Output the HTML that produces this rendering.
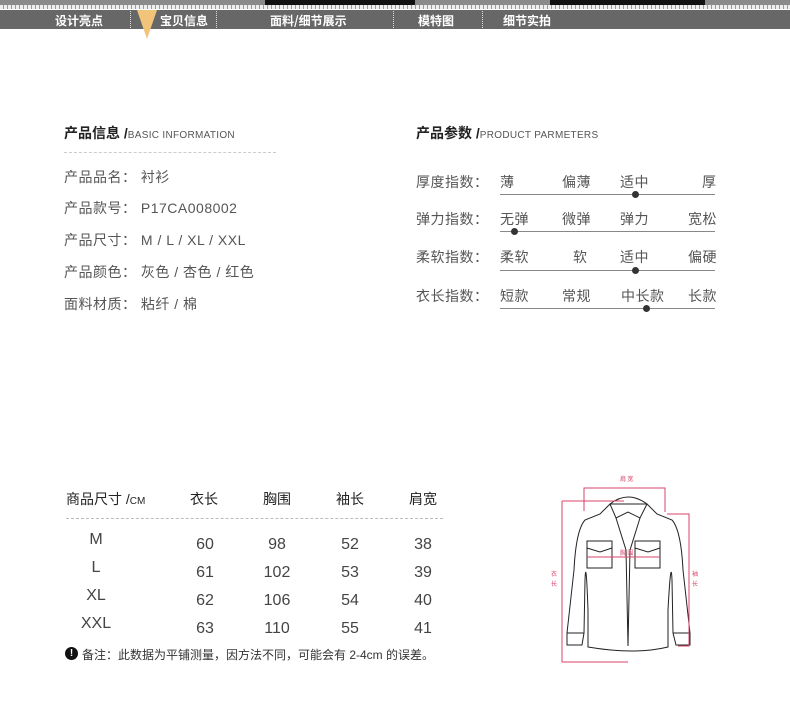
<!DOCTYPE html>
<html><head><meta charset="utf-8"><style>
*{margin:0;padding:0;box-sizing:border-box}
body{width:790px;height:709px;background:#fff;position:relative;overflow:hidden;font-family:"Liberation Sans","Noto Sans CJK SC",sans-serif;color:#555}
.a{position:absolute;white-space:nowrap}
.nav{position:absolute;left:0;top:10px;width:790px;height:19px;background:#676767}
.nav span{position:absolute;top:2px;color:#fff;font-size:12px;font-weight:bold;font-family:"WenQuanYi Zen Hei","Noto Sans CJK SC",sans-serif}
.dv{position:absolute;top:1px;height:17px;border-left:1px dotted #ddd}
.t{font-size:14px;font-weight:bold;color:#222}
.t small{font-size:10px;font-weight:normal;color:#555;letter-spacing:.3px}
.r{font-size:14px;color:#555;letter-spacing:.5px}
.ln{position:absolute;height:1px;background:#888}
.dot{position:absolute;width:7px;height:7px;border-radius:50%;background:#333}
.n{font-size:16px;color:#444;text-align:center;width:60px}
</style></head><body>
<div class="a" style="left:0;top:0;width:790px;height:8px;background:#8a8a8a"></div>
<div class="a" style="left:265px;top:0;width:150px;height:6px;background:#111"></div>
<div class="a" style="left:550px;top:0;width:155px;height:6px;background:#111"></div>
<div class="a" style="left:0;top:5px;width:790px;height:4px;background:repeating-linear-gradient(90deg,#eee 0 3px,#999 3px 4px)"></div>
<div class="nav">
<span style="left:55px">设计亮点</span><div class="dv" style="left:130px"></div>
<span style="left:160px">宝贝信息</span><div class="dv" style="left:216px"></div>
<span style="left:270px">面料/细节展示</span><div class="dv" style="left:393px"></div>
<span style="left:418px">模特图</span><div class="dv" style="left:482px"></div>
<span style="left:503px">细节实拍</span>
</div>
<svg class="a" style="left:135px;top:10px" width="24" height="30"><polygon points="2,0 22,0 12,29" fill="#f2c47a"/></svg>

<div class="a t" style="left:64px;top:123px">产品信息 /<small>BASIC INFORMATION</small></div>
<div class="a" style="left:64px;top:152px;width:212px;border-top:1px dashed #ccc"></div>
<div class="a r" style="left:64px;top:167px">产品品名： 衬衫</div>
<div class="a r" style="left:64px;top:198px">产品款号： P17CA008002</div>
<div class="a r" style="left:64px;top:230px">产品尺寸： M / L / XL / XXL</div>
<div class="a r" style="left:64px;top:262px">产品颜色： 灰色 / 杏色 / 红色</div>
<div class="a r" style="left:64px;top:294px">面料材质： 粘纤 / 棉</div>

<div class="a t" style="left:416px;top:123px">产品参数 /<small>PRODUCT PARMETERS</small></div>
<div class="a r" style="left:416px;top:172px">厚度指数：</div>
<div class="a r" style="left:416px;top:209px">弹力指数：</div>
<div class="a r" style="left:416px;top:247px">柔软指数：</div>
<div class="a r" style="left:416px;top:286px">衣长指数：</div>
<div class="a r" style="left:500px;top:172px">薄</div><div class="a r" style="left:562px;top:172px">偏薄</div><div class="a r" style="left:620px;top:172px">适中</div><div class="a r" style="left:702px;top:172px">厚</div>
<div class="a r" style="left:500px;top:209px">无弹</div><div class="a r" style="left:562px;top:209px">微弹</div><div class="a r" style="left:620px;top:209px">弹力</div><div class="a r" style="left:688px;top:209px">宽松</div>
<div class="a r" style="left:500px;top:247px">柔软</div><div class="a r" style="left:573px;top:247px">软</div><div class="a r" style="left:620px;top:247px">适中</div><div class="a r" style="left:688px;top:247px">偏硬</div>
<div class="a r" style="left:500px;top:286px">短款</div><div class="a r" style="left:562px;top:286px">常规</div><div class="a r" style="left:621px;top:286px">中长款</div><div class="a r" style="left:688px;top:286px">长款</div>
<div class="ln" style="left:500px;top:194px;width:215px"></div><div class="dot" style="left:632px;top:191px"></div>
<div class="ln" style="left:500px;top:231px;width:215px"></div><div class="dot" style="left:511px;top:228px"></div>
<div class="ln" style="left:500px;top:270px;width:215px"></div><div class="dot" style="left:632px;top:267px"></div>
<div class="ln" style="left:500px;top:308px;width:215px"></div><div class="dot" style="left:643px;top:305px"></div>

<div class="a" style="left:66px;top:489px;font-size:14px;color:#222">商品尺寸 /<span style="font-size:10px">CM</span></div>
<div class="a" style="left:190px;top:489px;font-size:14px;color:#222">衣长</div>
<div class="a" style="left:263px;top:489px;font-size:14px;color:#222">胸围</div>
<div class="a" style="left:336px;top:489px;font-size:14px;color:#222">袖长</div>
<div class="a" style="left:409px;top:489px;font-size:14px;color:#222">肩宽</div>
<div class="a" style="left:66px;top:518px;width:377px;border-top:1px dashed #bbb"></div>
<div class="a n" style="left:66px;top:531px">M</div><div class="a n" style="left:66px;top:559px">L</div><div class="a n" style="left:66px;top:587px">XL</div><div class="a n" style="left:66px;top:615px">XXL</div>
<div class="a n" style="left:175px;top:536px">60</div><div class="a n" style="left:247px;top:536px">98</div><div class="a n" style="left:320px;top:536px">52</div><div class="a n" style="left:393px;top:536px">38</div>
<div class="a n" style="left:175px;top:564px">61</div><div class="a n" style="left:247px;top:564px">102</div><div class="a n" style="left:320px;top:564px">53</div><div class="a n" style="left:393px;top:564px">39</div>
<div class="a n" style="left:175px;top:592px">62</div><div class="a n" style="left:247px;top:592px">106</div><div class="a n" style="left:320px;top:592px">54</div><div class="a n" style="left:393px;top:592px">40</div>
<div class="a n" style="left:175px;top:620px">63</div><div class="a n" style="left:247px;top:620px">110</div><div class="a n" style="left:320px;top:620px">55</div><div class="a n" style="left:393px;top:620px">41</div>
<div class="a" style="left:65px;top:647px;width:13px;height:13px;border-radius:50%;background:#111;color:#fff;font-size:10px;font-weight:bold;text-align:center;line-height:13px">!</div>
<div class="a" style="left:82px;top:646px;font-size:12px;color:#333">备注：此数据为平铺测量，因方法不同，可能会有 2-4cm 的误差。</div>

<svg class="a" style="left:540px;top:460px" width="180" height="210" viewBox="0 0 180 210" fill="none">
<g stroke="#222" stroke-width="1">
<path d="M70 44 L60 54 L45 60 Q36 70 34 110 L27 173 L27 185 L42 185 L44 173 L45 120 Q46 95 48 150 L48 187 Q95 195 128 187 L128 150 Q131 95 132 120 L133 173 L136 185 L150 185 L150 173 L143 110 Q141 70 132 60 L117 54 L107 44 Z"/>
<path d="M70 44 Q88 30 107 44 L100 58 L88 52 L76 58 Z"/>
<path d="M76 58 L86 90 L88 186"/><path d="M100 58 L90 90 L88 186"/>
<path d="M47 81 L72 81 L72 108 L47 108 Z"/><path d="M47 88 L60 92 L72 88"/>
<path d="M95 81 L120 81 L120 108 L95 108 Z"/><path d="M95 88 L108 92 L120 88"/>
<path d="M27 173 L44 173 M133 173 L150 173"/>
</g>
<g stroke="#d9466a" stroke-width="1">
<path d="M44 51 L44 28 L125 28 L125 52"/>
<path d="M22 41 L84 41 M22 41 L22 202 L88 202"/>
<path d="M127 54 L149 54 L149 186 L138 186"/>
<path d="M47 97 L120 97"/>
</g>
<g fill="#d9466a" font-size="6" font-family="Noto Sans CJK SC,sans-serif">
<text x="80" y="21">肩 宽</text><text x="80" y="95">胸 围</text>
<text x="11" y="116">衣</text><text x="11" y="126">长</text>
<text x="152" y="116">袖</text><text x="152" y="126">长</text>
</g>
</svg>
</body></html>
